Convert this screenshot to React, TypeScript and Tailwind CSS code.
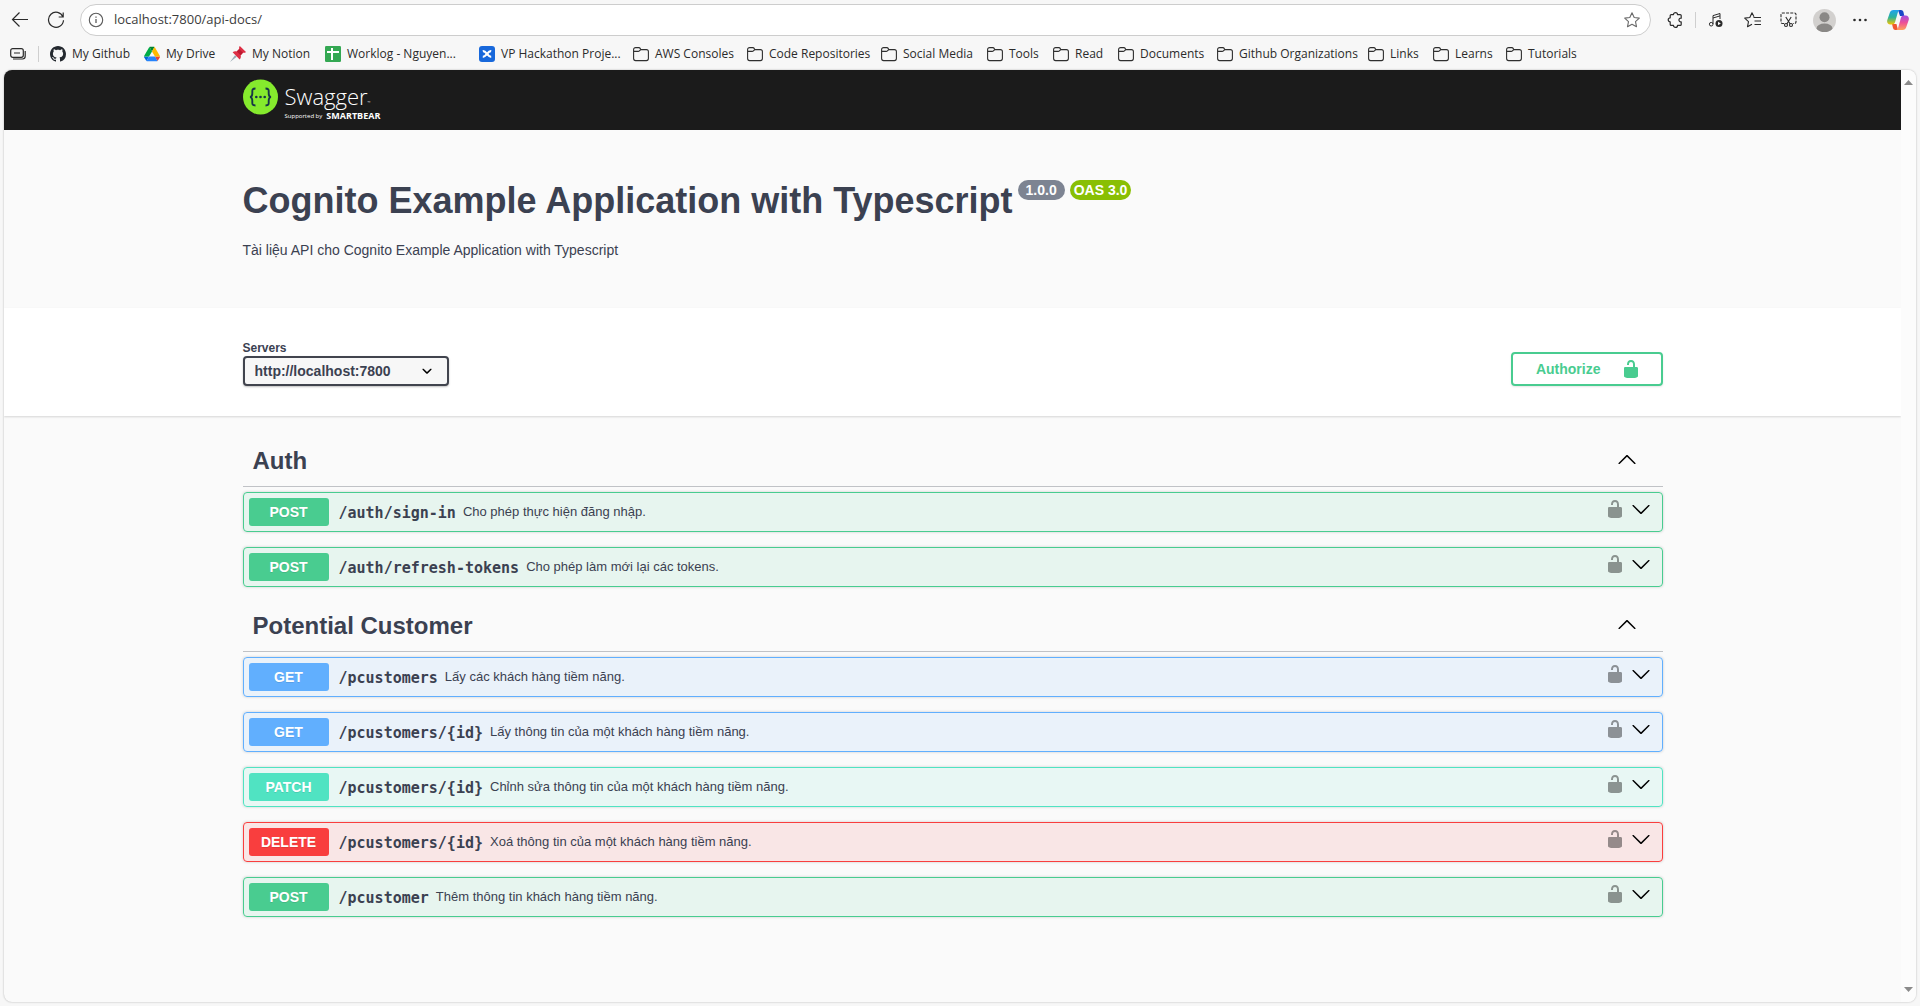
import React from "react";

const UI_FONT = "font-['Open_Sans','Noto_Sans',sans-serif]";

function Folder() {
  return (
    <svg width="16" height="16" viewBox="0 0 16 16" fill="none" stroke="#2f2f2f" strokeWidth="1.1">
      <path d="M.6 3.600a2 2 0 0 1 2-2h3.200c.6 0 1.100.3 1.400.8l.6 1.200h5.600a2 2 0 0 1 2 2v7a2 2 0 0 1-2 2H2.600a2 2 0 0 1-2-2z" />
      <path d="M.8 5.400h4.400c.5 0 .9-.2 1.200-.5l1.300-1.300" />
    </svg>
  );
}

function GithubMark() {
  return (
    <svg width="16" height="16" viewBox="0 0 16 16" fill="#24292f">
      <path d="M8 0C3.58 0 0 3.58 0 8c0 3.54 2.29 6.53 5.47 7.59.4.07.55-.17.55-.38 0-.19-.01-.82-.01-1.49-2.01.37-2.53-.49-2.69-.94-.09-.23-.48-.94-.82-1.13-.28-.15-.68-.52-.01-.53.63-.01 1.08.58 1.23.82.72 1.21 1.87.87 2.33.66.07-.52.28-.87.51-1.07-1.78-.2-3.64-.89-3.64-3.95 0-.87.31-1.59.82-2.15-.08-.2-.36-1.02.08-2.12 0 0 .67-.21 2.2.82.64-.18 1.32-.27 2-.27s1.36.09 2 .27c1.53-1.04 2.2-.82 2.2-.82.44 1.1.16 1.92.08 2.12.51.56.82 1.27.82 2.15 0 3.07-1.87 3.75-3.65 3.95.29.25.54.73.54 1.48 0 1.07-.01 1.93-.01 2.2 0 .21.15.46.55.38A8.01 8.01 0 0 0 16 8c0-4.42-3.58-8-8-8z" />
    </svg>
  );
}

function DriveMark() {
  return (
    <svg width="16" height="16" viewBox="0 0 87.3 87.3">
      <g transform="translate(0 4.6)">
        <path d="m6.6 66.85 3.85 6.65c.8 1.4 1.95 2.5 3.3 3.3l13.75-23.8h-27.5c0 1.55.4 3.1 1.2 4.5z" fill="#0066da" />
        <path d="m43.65 25-13.75-23.8c-1.35.8-2.5 1.9-3.3 3.3l-25.4 44a9.06 9.06 0 0 0-1.2 4.5h27.5z" fill="#00ac47" />
        <path d="m73.55 76.8c1.35-.8 2.5-1.9 3.3-3.3l1.6-2.75 7.65-13.25c.8-1.4 1.2-2.95 1.2-4.5h-27.5l5.85 11.5z" fill="#ea4335" />
        <path d="m43.65 25 13.75-23.8c-1.35-.8-2.9-1.2-4.5-1.2h-18.5c-1.6 0-3.15.45-4.5 1.2z" fill="#00832d" />
        <path d="m59.8 53h-32.3l-13.75 23.8c1.35.8 2.9 1.2 4.5 1.2h50.8c1.6 0 3.15-.45 4.5-1.2z" fill="#2684fc" />
        <path d="m73.4 26.5-12.7-22c-.8-1.4-1.95-2.5-3.3-3.3l-13.75 23.8 16.15 28h27.45c0-1.55-.4-3.1-1.2-4.5z" fill="#ffba00" />
      </g>
    </svg>
  );
}

function Pin() {
  return (
    <svg width="16" height="16" viewBox="0 0 16 16">
      <path d="M0 16 5 9.200l1.800 1.600z" fill="#99aab5" />
      <path d="M2.600 6.200c1.200-1 2.900-1.200 4.100-.8l2.500-2.400c-.3-1.100 0-2.300.6-3L16 6c-.8.8-2 1-3 .7l-2.300 2.500c.4 1.400.1 3.100-1 4.200z" fill="#dd2e44" />
      <path d="M6.700 5.400 10.700 9.200l2.300-2.500-3.800-3.700z" fill="#be1931" />
    </svg>
  );
}

function SheetMark() {
  return (
    <svg width="16" height="16" viewBox="0 0 16 16">
      <rect width="16" height="16" rx="1.200" fill="#34a853" />
      <path d="M2 5h4V2h2v3h6v2H8v7H6V7H2z" fill="#fff" />
    </svg>
  );
}

function ConfluenceMark() {
  return (
    <svg width="16" height="16" viewBox="0 0 16 16">
      <rect width="16" height="16" rx="3" fill="#1868db" />
      <path
        d="M3.800 5.200c3.400-.6 4.800 5.600 8.400 5.600M12.200 5.200c-3.400-.6-4.800 5.600-8.400 5.600"
        stroke="#fff"
        strokeWidth="2.300"
        fill="none"
      />
    </svg>
  );
}

const bookmarks: { label: string; width: string; icon: React.ReactNode }[] = [
  { label: "My Github", width: "w-[94px]", icon: <GithubMark /> },
  { label: "My Drive", width: "w-[86px]", icon: <DriveMark /> },
  { label: "My Notion", width: "w-[95px]", icon: <Pin /> },
  { label: "Worklog - Nguyen...", width: "w-[154px]", icon: <SheetMark /> },
  { label: "VP Hackathon Proje...", width: "w-[154px]", icon: <ConfluenceMark /> },
  { label: "AWS Consoles", width: "w-[114px]", icon: <Folder /> },
  { label: "Code Repositories", width: "w-[134px]", icon: <Folder /> },
  { label: "Social Media", width: "w-[106px]", icon: <Folder /> },
  { label: "Tools", width: "w-[66px]", icon: <Folder /> },
  { label: "Read", width: "w-[65px]", icon: <Folder /> },
  { label: "Documents", width: "w-[99px]", icon: <Folder /> },
  { label: "Github Organizations", width: "w-[151px]", icon: <Folder /> },
  { label: "Links", width: "w-[65px]", icon: <Folder /> },
  { label: "Learns", width: "w-[73px]", icon: <Folder /> },
  { label: "Tutorials", width: "w-[80px]", icon: <Folder /> },
];

function ToolButton({ label, children, wide }: { label: string; children: React.ReactNode; wide?: boolean }) {
  return (
    <button aria-label={label} className={`${wide ? "w-10" : "w-9"} flex h-8 shrink-0 items-center justify-center`}>
      {children}
    </button>
  );
}

function BrowserToolbar() {
  return (
    <div className="flex h-10 items-center px-0.5">
      <ToolButton label="Back">
        <svg width="18" height="18" viewBox="0 0 18 18" fill="none" stroke="#2b2b2b" strokeWidth="1.200">
          <path d="M17 8.500H1.500M8.500 1.500l-7 7 7 7" />
        </svg>
      </ToolButton>
      <ToolButton label="Refresh">
        <svg width="18" height="18" viewBox="0 0 18 18" fill="none" stroke="#2b2b2b" strokeWidth="1.200">
          <path d="M16 6A7.500 7.500 0 1 0 16.500 9.200M16.200 1.500V6h-4.500" />
        </svg>
      </ToolButton>
      <div className="ml-1.5 flex h-8 min-w-0 flex-1 items-center rounded-full border border-[#cdcdcd] bg-white pr-2.5 pl-[7px]">
        <svg width="16" height="16" viewBox="0 0 16 16" fill="none" stroke="#5c5c5c" strokeWidth="1.100">
          <circle cx="8" cy="8" r="6.700" />
          <path d="M8 7v4M8 4.600v1.200" strokeWidth="1.300" />
        </svg>
        <input
          aria-label="Address"
          defaultValue="localhost:7800/api-docs/"
          className="ml-2.5 min-w-0 flex-1 bg-transparent text-[13px] text-[#3c3c3c] outline-none"
        />
        <button aria-label="Add to favorites">
          <svg width="16" height="16" viewBox="0 0 16 16" fill="none" stroke="#6b6b6b" strokeWidth="1.100" strokeLinejoin="round">
            <path d="m8 .8 2.200 4.700 5.100.6-3.800 3.500 1 5.100L8 12.200l-4.500 2.500 1-5.100L.7 6.100l5.100-.6z" />
          </svg>
        </button>
      </div>
      <div className="ml-1.5 flex items-center">
        <ToolButton label="Extensions">
          <svg width="16" height="16" viewBox="0 0 16 16" fill="none" stroke="#2b2b2b" strokeWidth="1.200" strokeLinejoin="round">
            <path d="M4.200 2.600h2.300a2 2 0 0 1 4 0h2.700a1 1 0 0 1 1 1v2.600c-3-.6-3 4.200 0 3.600v2.600a1 1 0 0 1-1 1h-2.700a2 2 0 0 1-4 0H4.200a1 1 0 0 1-1-1V9.800a2 2 0 0 1 0-4V3.600a1 1 0 0 1 1-1z" />
          </svg>
        </ToolButton>
        <span className="mx-0.5 h-4 w-px bg-[#cfcfcf]" />
        <ToolButton label="Media controls">
          <svg width="16" height="16" viewBox="0 0 16 16" fill="none" stroke="#2b2b2b" strokeWidth="1">
            <path d="M5 12V3.600L12 1.500V7M5 6l7-2.100" />
            <circle cx="3.200" cy="12.200" r="1.800" />
            <circle cx="11" cy="11.500" r="3.500" fill="#2b2b2b" stroke="none" />
            <path d="m10 9.800 2.800 1.700-2.800 1.700z" fill="#f7f7f7" stroke="none" />
          </svg>
        </ToolButton>
        <ToolButton label="Favorites">
          <svg width="17" height="16" viewBox="0 0 17 16" fill="none" stroke="#2b2b2b" strokeWidth="1.100" strokeLinejoin="round">
            <path d="M10 4.800 8 .8 5.800 5.500l-5.100.6 3.800 3.500-1 5.100L8 12.200M9.500 5.500H17M10.500 9H17M10.500 12.500H17" />
          </svg>
        </ToolButton>
        <ToolButton label="Screenshot">
          <svg width="17" height="16" viewBox="0 0 17 16" fill="none" stroke="#2b2b2b" strokeWidth="1.100">
            <path d="M4 11.500H2.500a1.500 1.500 0 0 1-1.500-1.500V2.500A1.500 1.500 0 0 1 2.500 1h12A1.500 1.500 0 0 1 16 2.500V10a1.500 1.500 0 0 1-1.500 1.500H13" strokeDasharray="3 1.200" />
            <path d="m5.800 5 4.400 7M11.200 5l-4.400 7" />
            <circle cx="6" cy="13" r="1.500" />
            <circle cx="11" cy="13" r="1.500" />
          </svg>
        </ToolButton>
        <ToolButton label="Profile">
          <svg width="23" height="23" viewBox="0 0 23 23">
            <clipPath id="avatar">
              <circle cx="11.500" cy="11.500" r="11.500" />
            </clipPath>
            <g clipPath="url(#avatar)">
              <rect width="23" height="23" fill="#d2d0ce" />
              <circle cx="11.500" cy="8.200" r="5" fill="#8a8886" />
              <ellipse cx="11.500" cy="19.500" rx="8" ry="5" fill="#8a8886" />
            </g>
          </svg>
        </ToolButton>
        <ToolButton label="Settings and more">
          <svg width="16" height="4" viewBox="0 0 16 4" fill="#2b2b2b">
            <circle cx="2.500" cy="2" r="1.300" />
            <circle cx="8" cy="2" r="1.300" />
            <circle cx="13.500" cy="2" r="1.300" />
          </svg>
        </ToolButton>
        <ToolButton label="Copilot" wide>
          <svg width="22" height="20" viewBox="0 0 22 20">
            <defs>
              <linearGradient id="cpA" x1="0" y1="0" x2="0" y2="1">
                <stop offset="0" stopColor="#1fa2ee" />
                <stop offset=".5" stopColor="#2bb39a" />
                <stop offset="1" stopColor="#f5c400" />
              </linearGradient>
              <linearGradient id="cpB" x1="0" y1="0" x2="0" y2="1">
                <stop offset="0" stopColor="#a24fe0" />
                <stop offset=".5" stopColor="#ee5097" />
                <stop offset="1" stopColor="#ffa25b" />
              </linearGradient>
            </defs>
            <path d="M11 0h3a2.500 2.500 0 0 1 2.400 1.800L17.300 6H13z" fill="#1a48c8" />
            <path d="M5 14h4.500L11 20H8.500A2.500 2.500 0 0 1 6 18z" fill="#f0562f" />
            <path d="M6.500 0h6.300c-1.500.5-1.900 2-2.300 3.500L8.200 11.800C7.600 14 6.500 14.500 5 14.500H3.300C.8 14.500-.4 12.500.3 10L2.700 3C3.300 1 4.500 0 6.500 0z" fill="url(#cpA)" />
            <path d="M15.500 20H9.200c1.500-.5 1.900-2 2.300-3.500l2.300-8.300c.6-2.200 1.700-2.700 3.200-2.700h1.700c2.500 0 3.700 2 3 4.500L19.300 17c-.6 2-1.800 3-3.800 3z" fill="url(#cpB)" />
          </svg>
        </ToolButton>
      </div>
    </div>
  );
}

function BookmarksBar() {
  return (
    <nav className="mb-0.5 flex h-7 items-center pl-2.5">
      <button aria-label="Workspaces">
        <svg width="16" height="12" viewBox="0 0 16 12" fill="none" stroke="#2b2b2b" strokeWidth="1.200">
          <rect x=".7" y=".7" width="12.600" height="8.600" rx="2" />
          <path d="M4 5h6M3 11h9.500a2.700 2.700 0 0 0 2.700-2.700V3" />
        </svg>
      </button>
      <span className="mr-[11px] ml-3 h-4 w-px bg-[#cfcfcf]" />
      {bookmarks.map((b) => (
        <a
          key={b.label}
          href="#"
          className={`${b.width} flex shrink-0 items-center gap-1.5 text-xs whitespace-nowrap text-[#2b2b2b]`}
        >
          <span className="shrink-0">{b.icon}</span>
          {b.label}
        </a>
      ))}
    </nav>
  );
}

function Unlocked() {
  return (
    <svg width="20" height="20" viewBox="0 0 20 20" fill="currentColor">
      <path d="M15.800 8H14V5.600C14 2.703 12.665 1 10 1 7.334 1 6 2.703 6 5.600V6h2v-.801C8 3.754 8.797 3 10 3c1.203 0 2 .754 2 2.199V8H4c-.553 0-1 .646-1 1.199V17c0 .549.428 1.139.951 1.307l1.197.387C5.672 18.861 6.550 19 7.100 19h5.800c.549 0 1.428-.139 1.951-.307l1.196-.387c.524-.167.953-.757.953-1.306V9.199C17 8.646 16.352 8 15.800 8z" />
    </svg>
  );
}

function Chevron({ up }: { up?: boolean }) {
  return (
    <svg width="20" height="20" viewBox="0 0 20 20" fill="#000">
      <path
        d={
          up
            ? "M17.418 14.908c.272.268.709.268.979 0s.271-.701 0-.969L10.489 6.109c-.27-.268-.707-.268-.979 0l-7.908 7.830c-.27.268-.27.701 0 .969.271.268.709.268.979 0L10 7.767l7.418 7.141z"
            : "M17.418 6.109c.272-.268.709-.268.979 0s.271.701 0 .969l-7.908 7.830c-.27.268-.707.268-.979 0l-7.908-7.830c-.27-.268-.27-.701 0-.969.271-.268.709-.268.979 0L10 13.250l7.418-7.141z"
        }
      />
    </svg>
  );
}

type Method = "GET" | "POST" | "PATCH" | "DELETE";

const rowStyle: Record<Method, string> = {
  GET: "border-[#61affe] bg-[#61affe]/10",
  POST: "border-[#49cc90] bg-[#49cc90]/10",
  PATCH: "border-[#50e3c2] bg-[#50e3c2]/10",
  DELETE: "border-[#f93e3e] bg-[#f93e3e]/10",
};

const badgeStyle: Record<Method, string> = {
  GET: "bg-[#61affe]",
  POST: "bg-[#49cc90]",
  PATCH: "bg-[#50e3c2]",
  DELETE: "bg-[#f93e3e]",
};

const groups: { name: string; operations: { method: Method; path: string; summary: string }[] }[] = [
  {
    name: "Auth",
    operations: [
      { method: "POST", path: "/auth/sign-in", summary: "Cho phép thực hiện đăng nhập." },
      { method: "POST", path: "/auth/refresh-tokens", summary: "Cho phép làm mới lại các tokens." },
    ],
  },
  {
    name: "Potential Customer",
    operations: [
      { method: "GET", path: "/pcustomers", summary: "Lấy các khách hàng tiềm năng." },
      { method: "GET", path: "/pcustomers/{id}", summary: "Lấy thông tin của một khách hàng tiềm năng." },
      { method: "PATCH", path: "/pcustomers/{id}", summary: "Chỉnh sửa thông tin của một khách hàng tiềm năng." },
      { method: "DELETE", path: "/pcustomers/{id}", summary: "Xoá thông tin của một khách hàng tiềm năng." },
      { method: "POST", path: "/pcustomer", summary: "Thêm thông tin khách hàng tiềm năng." },
    ],
  },
];

function Operation({ method, path, summary }: { method: Method; path: string; summary: string }) {
  return (
    <div
      className={`${rowStyle[method]} mb-[15px] flex h-10 items-center rounded border pr-[11px] pl-[5px] shadow-[0_0_3px_rgba(0,0,0,0.19)]`}
    >
      <button className="flex min-w-0 flex-1 items-center text-left">
        <span
          className={`${badgeStyle[method]} w-20 rounded-[3px] text-center text-sm leading-7 font-bold text-white [text-shadow:0_1px_0_rgba(0,0,0,0.1)]`}
        >
          {method}
        </span>
        <span className="ml-2.5 pt-0.5 font-['DejaVu_Sans_Mono',monospace] text-[15px] leading-5 font-bold">{path}</span>
        <span className="ml-[7px] text-[13px]">{summary}</span>
      </button>
      <button aria-label="Authorization button unlocked" className="mt-1.5 mr-1.5 self-start text-black/40">
        <Unlocked />
      </button>
      <button aria-label={`Expand ${method} ${path}`} className="mt-1.5 self-start">
        <Chevron />
      </button>
    </div>
  );
}

const WRAP = "mx-auto w-full max-w-[1460px] px-5";

function SwaggerLogo() {
  return (
    <a href="#" aria-label="Swagger" className="flex gap-[7px] text-white">
      <svg width="35" height="36" viewBox="0 0 35 36">
        <circle cx="17.500" cy="18" r="17.500" fill="#85ea2d" />
        <g fill="none" stroke="#173647" strokeWidth="1.900">
          <path d="M12.500 9.500c-3 0-3.300 1-3.200 3.200.1 2.600.4 5-2.300 5.300 2.700.3 2.400 2.700 2.300 5.300-.1 2.200.2 3.200 3.200 3.200" />
          <path d="M22.500 9.500c3 0 3.300 1 3.200 3.200-.1 2.600-.4 5 2.300 5.300-2.700.3-2.400 2.700-2.300 5.300.1 2.200-.2 3.200-3.200 3.200" />
        </g>
        <g fill="#173647">
          <circle cx="13.300" cy="18" r="1.300" />
          <circle cx="17.500" cy="18" r="1.300" />
          <circle cx="21.700" cy="18" r="1.300" />
        </g>
      </svg>
      <span className={`${UI_FONT} flex flex-col pt-0.5`}>
        <span className="flex items-end text-[22px] leading-[30px] font-light">
          Swagger<span className="text-[4px] leading-4">™</span>
        </span>
        <span className="flex items-center gap-1 text-[6px] leading-[10px] whitespace-nowrap">
          Supported by <b className="text-[9px]">SMARTBEAR</b>
        </span>
      </span>
    </a>
  );
}

export default function App() {
  return (
    <div className={`${UI_FONT} flex min-h-screen flex-col bg-[#f7f7f7]`}>
      <header>
        <BrowserToolbar />
        <BookmarksBar />
      </header>
      <div className="mx-1 mb-1 flex flex-1 overflow-hidden rounded-lg bg-[#fafafa] font-['Liberation_Sans',Arial,sans-serif] text-[#3b4151] shadow-[0_0_2px_rgba(0,0,0,0.3)]">
        <main className="min-w-0 flex-1">
          <div className="bg-[#1b1b1b]">
            <div className={`${WRAP} flex h-[60px] items-start pt-[9px]`}>
              <SwaggerLogo />
            </div>
          </div>

          <section className={`${WRAP} py-[50px]`}>
            <div className="flex items-start gap-[5px]">
              <h1 className="text-4xl leading-[41px] font-bold">Cognito Example Application with Typescript</h1>
              <span className="rounded-full bg-[#7d8492] px-2 text-sm leading-5 font-bold text-white">1.0.0</span>
              <span className="rounded-full bg-[#89bf04] px-1 text-sm leading-5 font-bold text-white">OAS 3.0</span>
            </div>
            <p className="mt-[21px] text-sm leading-4">Tài liệu API cho Cognito Example Application with Typescript</p>
          </section>

          <section className="bg-white pt-8 pb-[30px] shadow-[0_1px_2px_rgba(0,0,0,0.15)]">
            <div className={`${WRAP} flex items-end justify-between`}>
              <div className="flex flex-col">
                <label htmlFor="servers" className="text-xs leading-4 font-bold">
                  Servers
                </label>
                <div className="relative">
                  <select
                    id="servers"
                    className="block h-[30px] w-[206px] appearance-none rounded border-2 border-[#41444e] bg-[#f7f7f7] pl-2.5 text-sm leading-4 font-bold shadow-[0_1px_2px_rgba(0,0,0,0.25)]"
                  >
                    <option>http://localhost:7800</option>
                  </select>
                  <svg
                    width="20"
                    height="20"
                    viewBox="0 0 20 20"
                    className="pointer-events-none absolute top-[5px] right-3"
                  >
                    <path d="M13.418 7.859c.271-.268.709-.268.978 0 .27.268.272.701 0 .969l-3.908 3.830c-.27.268-.707.268-.979 0l-3.908-3.830c-.27-.267-.27-.701 0-.969.271-.268.709-.268.978 0L10 11l3.418-3.141z" />
                  </svg>
                </div>
              </div>
              <button className="flex h-[34px] items-center gap-5 rounded border-2 border-[#49cc90] pr-5 pl-[23px] text-sm font-bold text-[#49cc90] shadow-[0_1px_2px_rgba(0,0,0,0.1)]">
                Authorize
                <Unlocked />
              </button>
            </div>
          </section>

          <section className={`${WRAP} pt-[21px]`}>
            {groups.map((g) => (
              <div key={g.name}>
                <div className="mb-[5px] flex items-start justify-between border-b border-[#3b4151]/30 pt-2.5 pr-[26px] pb-[11px] pl-2.5">
                  <h2 className="text-2xl leading-7 font-bold">{g.name}</h2>
                  <button aria-label={`Collapse ${g.name}`} className="mt-0.5">
                    <Chevron up />
                  </button>
                </div>
                {g.operations.map((o) => (
                  <Operation key={o.method + o.path} {...o} />
                ))}
              </div>
            ))}
          </section>
        </main>
        <div className="flex w-[15px] shrink-0 flex-col items-center justify-between bg-[#fcfcfc] py-2.5">
          <svg width="9" height="5" viewBox="0 0 9 5" fill="#8a8a8a">
            <path d="M4.500 0 9 5H0z" />
          </svg>
          <svg width="9" height="5" viewBox="0 0 9 5" fill="#8a8a8a">
            <path d="M4.500 5 9 0H0z" />
          </svg>
        </div>
      </div>
    </div>
  );
}
